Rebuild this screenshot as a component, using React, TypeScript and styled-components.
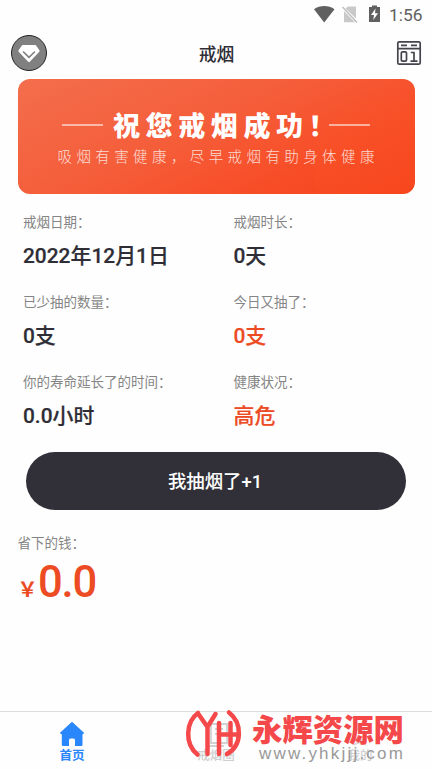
import React from "react";
import styled, { createGlobalStyle } from "styled-components";

const Global = createGlobalStyle`
  * { box-sizing: border-box; }
  html, body { margin: 0; padding: 0; background: #fefefe; }
  body { font-family: Roboto, "Noto Sans CJK SC", sans-serif; color: #2f2e37; overflow: hidden; }
`;

const Screen = styled.div`
  position: relative;
  width: 432px;
  height: 769px;
  display: flex;
  flex-direction: column;
  background: #fefefe;
  overflow: hidden;
`;

const StatusBar = styled.div`
  height: 28px;
  flex: none;
  display: flex;
  align-items: center;
  justify-content: flex-end;
  padding: 0 9px 0 0;
  svg { display: block; }
`;

const Clock = styled.span`
  width: 34px;
  margin-left: 8px;
  font-size: 17.4px;
  line-height: 20px;
  padding-top: 2px;
  color: #606060;
  white-space: nowrap;
`;

const Header = styled.header`
  height: 51px;
  flex: none;
  display: grid;
  grid-template-columns: 60px 1fr 60px;
  align-items: center;
  padding: 0 10px 1px 11px;
`;

const Avatar = styled.div`
  width: 36px;
  height: 36px;
  border: 1px solid #222;
  border-radius: 50%;
  background: #808080;
  display: flex;
  align-items: center;
  justify-content: center;
`;

const Title = styled.h1`
  margin: 4px 0 0;
  text-align: center;
  font-size: 17.8px;
  line-height: 24px;
  font-weight: 500;
`;

const CalendarSlot = styled.div`
  display: flex;
  justify-content: flex-end;
`;

const Banner = styled.section`
  flex: none;
  position: relative;
  width: 397px;
  height: 115px;
  margin-left: 17.5px;
  padding-top: 26px;
  border-radius: 12px;
  overflow: hidden;
  color: #fff;
  background:
    radial-gradient(circle at 369px 91px, rgba(255, 90, 35, 0.13) 0 72px, transparent 73px),
    linear-gradient(155deg, #f36e4d 0%, #f55d39 45%, #f74e28 72%, #f6431c 100%);
`;

const BannerHeading = styled.div`
  display: flex;
  align-items: center;
  height: 40px;
  padding-left: 44px;
`;

const Rule = styled.span`
  width: 41px;
  height: 2px;
  background: rgba(255, 255, 255, 0.55);
`;

const BannerTitle = styled.strong`
  width: 216px;
  margin-left: 10.5px;
  font-family: "Noto Sans CJK SC", sans-serif;
  font-size: 27px;
  line-height: 40px;
  font-weight: 900;
  letter-spacing: 5.6px;
  white-space: nowrap;
`;

const BannerNote = styled.p`
  margin: 0 0 0 40px;
  font-family: "Noto Sans CJK SC", sans-serif;
  font-size: 14.5px;
  line-height: 22px;
  font-weight: 300;
  letter-spacing: 4.4px;
  white-space: nowrap;
  color: rgba(255, 255, 255, 0.8);
`;

const Stats = styled.dl`
  flex: none;
  margin: 0;
  padding: 16px 0 0 23px;
  display: grid;
  grid-template-columns: 210.5px 1fr;
  grid-auto-rows: 80px;
`;

const Stat = styled.div``;

const Label = styled.dt`
  font-size: 13.5px;
  line-height: 24px;
  color: #858585;
  white-space: nowrap;
`;

const Value = styled.dd<{ $alert?: boolean }>`
  margin: 7px 0 0;
  font-size: 20.9px;
  line-height: 30px;
  font-weight: 500;
  -webkit-text-stroke: 0.2px currentColor;
  white-space: nowrap;
  color: ${(p) => (p.$alert ? "#ec4b23" : "#2f2e37")};
`;

const SmokeButton = styled.button`
  flex: none;
  width: 380px;
  height: 58px;
  margin: 2px 0 0 25.5px;
  padding: 2px 1px 0 0;
  border: 0;
  border-radius: 29px;
  background: #312f38;
  color: #fff;
  font: 500 18.4px/28px Roboto, "Noto Sans CJK SC", sans-serif;
`;

const Savings = styled.section`
  flex: 1;
  padding: 21px 0 0 17.5px;
`;

const Money = styled.div`
  display: flex;
  align-items: baseline;
  padding-top: 2px;
  color: #ec4b23;
  font-weight: 500;
  font-size: 43.5px;
  line-height: 52px;
  letter-spacing: -1.2px;
`;

const Currency = styled.span`
  width: 20.5px;
  font-family: "Noto Sans CJK SC", sans-serif;
  font-size: 20px;
  font-weight: 700;
  letter-spacing: 0;
  line-height: 30px;
`;

const TabBar = styled.nav`
  flex: none;
  height: 58px;
  border-top: 1px solid #ddd;
  display: grid;
  grid-template-columns: repeat(3, 1fr);
`;

const Tab = styled.div<{ $active?: boolean }>`
  display: flex;
  flex-direction: column;
  align-items: center;
  padding-top: 9px;
  font-size: 12.5px;
  line-height: 18px;
  font-weight: ${(p) => (p.$active ? 700 : 500)};
  color: ${(p) => (p.$active ? "#2a86fb" : "#cfcfcf")};
  svg { display: block; flex: none; }
`;

const Watermark = styled.aside`
  position: absolute;
  left: 185px;
  top: 708px;
  display: flex;
  pointer-events: none;
`;

const WatermarkText = styled.div`
  width: 170px;
  margin-left: 9px;
  padding-top: 2px;
`;

const WatermarkName = styled.div`
  font-family: "Noto Sans CJK SC", sans-serif;
  font-size: 30.4px;
  line-height: 37px;
  font-weight: 900;
  color: #f5484a;
  white-space: nowrap;
`;

const WatermarkUrl = styled.div`
  margin: -3px 0 0 7px;
  font-family: "Liberation Sans", sans-serif;
  font-size: 17px;
  line-height: 20px;
  letter-spacing: 2.2px;
  color: #999;
  white-space: nowrap;
`;

const stats = [
  { label: "戒烟日期：", value: "2022年12月1日" },
  { label: "戒烟时长：", value: "0天" },
  { label: "已少抽的数量：", value: "0支" },
  { label: "今日又抽了：", value: "0支", alert: true },
  { label: "你的寿命延长了的时间：", value: "0.0小时" },
  { label: "健康状况：", value: "高危", alert: true },
];

const StatusIcons = () => (
  <svg width="68" height="20" viewBox="0 0 68 20">
    <path d="M1 5.2C7 .8 15.500.8 21.500 5.200L11.200 18.500Z" fill="#606060" />
    <path d="M35 2.500H43V14.500L32.500 4.500ZM31 7L42 18.300H31Z" fill="#c9c9c9" />
    <path d="M29.500 3L44 18.500" stroke="#bbb" strokeWidth="1.300" />
    <path d="M56 3H59V1.500H64V3H67V18H56Z" fill="#606060" />
    <path d="M62.500 4.500L58 11H61L60.300 16L65 9.200H62Z" fill="#fff" />
  </svg>
);

const GemIcon = () => (
  <svg width="24" height="22" viewBox="0 0 24 22">
    <path d="M6 4H18L21.500 9L12 19L2.500 9Z" fill="#fff" stroke="#fff" strokeWidth="2.200" strokeLinejoin="round" />
    <path d="M6.500 10L12 15.300L17.500 10" fill="none" stroke="#808080" strokeWidth="1.600" strokeLinecap="round" />
  </svg>
);

const CalendarIcon = () => (
  <svg width="26" height="26" viewBox="0 0 26 26" fill="none" stroke="#45434b" strokeWidth="1.700">
    <rect x="1.800" y="1.800" width="22.400" height="22.400" rx="1.500" />
    <path d="M2 8.700H24M5 5.300H11M15 5.300H21" />
    <rect x="5.300" y="11.800" width="5.200" height="9.400" rx="1.300" />
    <path d="M14.800 12.500H18V21.200M14.500 21.200H21.500" />
  </svg>
);

const HomeIcon = () => (
  <svg width="26" height="26" viewBox="0 0 26 26">
    <path d="M13 .8L25 11.800Q25 13.200 23.500 13.200V23.500Q23.500 25 22.500 25H16V19Q16 17.500 14.500 17.500H11.500Q10 17.500 10 19V25H4Q2.800 25 2.800 23.500V13.200Q1 13.200 1 11.800Z" fill="#2a86fb" />
  </svg>
);

const PageIcon = () => (
  <svg width="26" height="26" viewBox="0 0 26 26" fill="none" stroke="#d2d2d2" strokeWidth="1.800">
    <path d="M8 3H24V22H8ZM12 8H20M12 13H20M4 6V25H21" />
  </svg>
);

const UserIcon = () => (
  <svg width="26" height="26" viewBox="0 0 26 26" fill="none" stroke="#d8d8d8" strokeWidth="1.800">
    <circle cx="13" cy="14" r="6" />
    <path d="M7 24Q13 19 19 24" />
  </svg>
);

const WatermarkLogo = () => (
  <svg width="58" height="50" viewBox="0 0 58 50" fill="none" stroke="#f5484a" strokeWidth="4.500" strokeLinecap="round">
    <path d="M13 5C.5 14-.5 36 12.500 46.500" />
    <path d="M44 4.500C57.500 15 57.500 37 42 46" />
    <path d="M13 5.500L22.500 19L30.500 6M22.500 19V46M34 15V46M45.500 15V37M34 26.500H53" />
  </svg>
);

export default function App() {
  return (
    <>
      <Global />
      <Screen lang="zh-CN">
        <StatusBar>
          <StatusIcons />
          <Clock>1:56</Clock>
        </StatusBar>
        <Header>
          <Avatar><GemIcon /></Avatar>
          <Title>戒烟</Title>
          <CalendarSlot><CalendarIcon /></CalendarSlot>
        </Header>
        <Banner>
          <BannerHeading>
            <Rule />
            <BannerTitle>祝您戒烟成功！</BannerTitle>
            <Rule />
          </BannerHeading>
          <BannerNote>吸烟有害健康，尽早戒烟有助身体健康</BannerNote>
        </Banner>
        <Stats>
          {stats.map((s) => (
            <Stat key={s.label}>
              <Label>{s.label}</Label>
              <Value $alert={s.alert}>{s.value}</Value>
            </Stat>
          ))}
        </Stats>
        <SmokeButton>我抽烟了+1</SmokeButton>
        <Savings>
          <Label as="div">省下的钱：</Label>
          <Money><Currency>￥</Currency>0.0</Money>
        </Savings>
        <TabBar>
          <Tab $active><HomeIcon />首页</Tab>
          <Tab><PageIcon />戒烟圈</Tab>
          <Tab><UserIcon />我的</Tab>
        </TabBar>
        <Watermark>
          <WatermarkLogo />
          <WatermarkText>
            <WatermarkName>永辉资源网</WatermarkName>
            <WatermarkUrl>www.yhkjjj.com</WatermarkUrl>
          </WatermarkText>
        </Watermark>
      </Screen>
    </>
  );
}
